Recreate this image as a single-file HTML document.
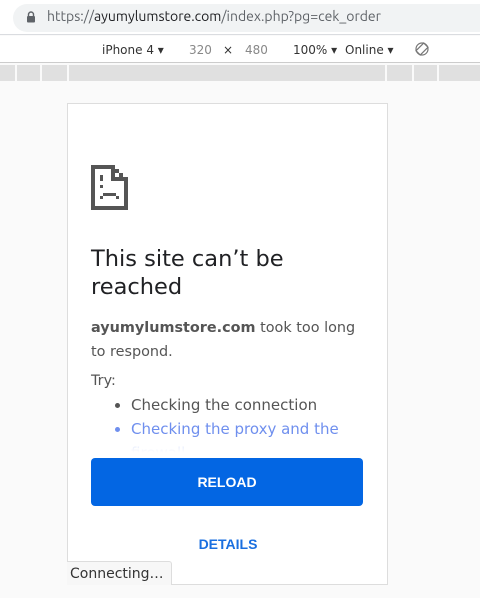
<!DOCTYPE html>
<html><head><style>
*{margin:0;padding:0;box-sizing:border-box}
body{width:480px;height:598px;background:#fafafa;font-family:"DejaVu Sans","Liberation Sans",sans-serif;position:relative;overflow:hidden}
.top{position:absolute;left:0;top:0;width:480px;height:35px;background:#fff;border-bottom:1px solid #dadce0}
.pill{position:absolute;left:13px;top:4px;width:480px;height:28px;background:#f1f3f4;border-radius:14px}
.url{position:absolute;left:47px;top:8px;font-size:14px;color:#5f6368;font-family:"Ubuntu","DejaVu Sans",sans-serif}
.url b{font-weight:normal;color:#202124}
.tb{position:absolute;left:0;top:36px;width:480px;height:27px;background:#fff;border-bottom:1px solid #ccc;font-size:12px;color:#333;font-family:"DejaVu Sans",sans-serif}
.tb span{position:absolute;top:7px}
.ruler{position:absolute;top:65px;height:16px;background:#e0e0e0}
.card{position:absolute;left:67px;top:103px;width:321px;height:482px;background:#fff;border:1px solid #ddd;overflow:hidden}
h1{position:absolute;left:23px;top:141px;font-size:22.5px;font-weight:normal;color:#202124;line-height:28px;width:280px}
.p{position:absolute;left:23px;top:212px;font-size:14.4px;color:#555;line-height:24px;width:278px}
.p b{color:#555}
.btn{position:absolute;left:23px;top:354px;width:272px;height:48px;background:#0366e3;border-radius:4px;color:#fff;font:bold 14px "Liberation Sans",sans-serif;text-align:center;line-height:48px}
.det{position:absolute;left:0;width:320px;top:432px;text-align:center;color:#1a6fe0;font:bold 14px "Liberation Sans",sans-serif}
.conn{position:absolute;left:67px;top:561px;width:105px;height:24px;background:#f7f7f7;border:1px solid #ddd;border-left:none;border-bottom:none;border-radius:0 3px 0 0;font-size:14px;color:#333;padding:4px 0 0 3px}
</style></head><body>
<div class="top"><div class="pill"></div>
<svg style="position:absolute;left:26px;top:11px" width="10" height="12" viewBox="0 0 10 12"><path d="M2.5 5V3.5a2.5 2.5 0 015 0V5" fill="none" stroke="#5f6368" stroke-width="1.4"/><rect x="1" y="5" width="8" height="6.5" rx="1" fill="#5f6368"/></svg>
<div class="url">https://<b>ayumylumstore.com</b>/index.php?pg=cek_order</div></div>
<div class="tb"><span style="left:102px">iPhone 4 ▾</span><span style="left:189px;color:#888">320</span><span style="left:223px">×</span><span style="left:245px;color:#888">480</span><span style="left:293px">100% ▾</span><span style="left:345px">Online ▾</span>
<svg style="position:absolute;left:415px;top:6px" width="14" height="14" viewBox="0 0 14 14"><circle cx="7" cy="7" r="6" fill="none" stroke="#777" stroke-width="1.2"/><rect x="4" y="1.5" width="6" height="11" transform="rotate(45 7 7)" fill="none" stroke="#777" stroke-width="1.2"/></svg></div>
<div class="ruler" style="left:0;width:15px"></div><div class="ruler" style="left:17px;width:23px"></div><div class="ruler" style="left:42px;width:25px"></div><div class="ruler" style="left:69px;width:316px"></div><div class="ruler" style="left:387px;width:25px"></div><div class="ruler" style="left:414px;width:23px"></div><div class="ruler" style="left:439px;width:41px"></div>
<div class="card">
<svg style="position:absolute;left:23px;top:61px" width="37" height="45" viewBox="0 0 37 45" shape-rendering="crispEdges" fill="#555">
<rect x="0" y="0" width="24" height="4"/><rect x="0" y="0" width="4" height="45"/><rect x="0" y="41" width="37" height="4"/><rect x="33" y="12" width="4" height="33"/>
<rect x="20" y="0" width="4" height="16"/><rect x="20" y="12" width="17" height="4"/><rect x="24" y="4" width="4" height="4"/><rect x="28" y="8" width="4" height="4"/>
<rect x="9" y="10" width="3" height="6"/><rect x="9" y="20" width="3" height="3"/><rect x="12" y="28" width="13" height="3"/><rect x="9" y="31" width="3" height="3"/><rect x="25" y="31" width="3" height="3"/></svg>
<h1>This site can’t be reached</h1>
<div class="p"><b>ayumylumstore.com</b> took too long to respond.<div style="margin-top:5px">Try:</div>
<ul style="margin-left:40px;font-size:15px;width:218px"><li>Checking the connection</li><li style="color:#6f8fee">Checking the proxy and the firewall</li></ul></div>
<div style="position:absolute;left:0;top:336px;width:320px;height:18px;background:linear-gradient(rgba(255,255,255,0.7),#fff 70%)"></div>
<div class="btn">RELOAD</div>
<div class="det">DETAILS</div>
</div>
<div class="conn">Connecting…</div>
</body></html>
